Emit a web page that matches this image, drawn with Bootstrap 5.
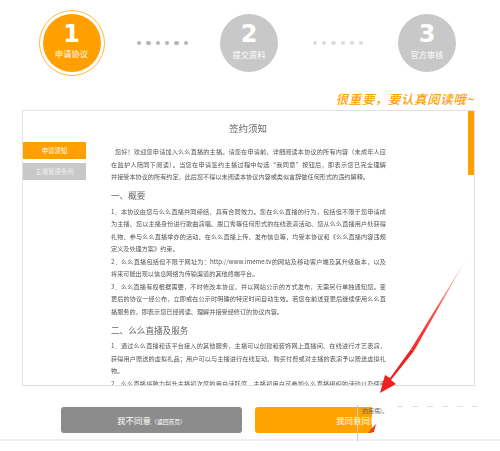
<!DOCTYPE html>
<html lang="zh">
<head>
<meta charset="utf-8">
<title>签约须知</title>
<link href="https://cdn.jsdelivr.net/npm/bootstrap@5.3.0/dist/css/bootstrap.min.css" rel="stylesheet">
<style>
html,body{margin:0;height:451px;overflow:hidden;background:#fff;font-family:"Noto Sans CJK SC","Liberation Sans",sans-serif}
.stage{position:relative;width:500px;height:451px;overflow:hidden}
.steps{height:90px;padding:10px 0 14px 39px;align-items:center}
.stepwrap{width:66px;height:66px;flex:none;border:1.5px solid #ffb840;border-radius:50%;padding:2.5px}
.stepdisc{width:58px;height:58px;flex:none;border-radius:50%;background:#c8c8c8;color:#fff}
.stepwrap .stepdisc{background:#ffa000}
.stepnum{font:bold 24px/18px "DejaVu Sans",sans-serif;height:18px;margin-top:11px}
.steplabel{font-size:8.2px;line-height:11px;margin-top:5.5px;white-space:nowrap}
.dotrow{flex:none;gap:5px;justify-content:center}
.dotrow.lite i{background:#dcdcdc}
.dotrow i{width:4.3px;height:4.3px;border-radius:50%;background:#b4b4b4;display:block}
.dots-a{width:115px}
.dots-b{width:120px}
.note{height:20px;padding-right:26px;color:#ffa000;font-size:12.5px;line-height:17px;letter-spacing:.55px;font-style:italic;font-weight:500;text-align:right;white-space:nowrap}
.panel{width:453px;height:276px;margin-left:22px;border:1px solid #e2e2e2;border-bottom-color:#dcdcdc;overflow:hidden;background:#fff}
.sidecol{width:63px;flex:none;padding-top:31px}
.sidebtn{height:17px;font-size:6.4px;line-height:17px;text-align:center;color:#fff;white-space:nowrap;margin-bottom:4px}
.sidebtn.on{background:#ffa000}
.sidebtn.off{background:#c8c8c8;color:#eee}
.doc{width:275px;flex:none;margin-left:25px;color:#555;overflow:hidden;filter:blur(.3px)}
.doctitle{font-size:9.5px;line-height:14px;text-align:center;color:#666;padding:10px 0 11px;margin-left:-1px}
.ln{font-size:6.15px;line-height:12.5px;height:12.5px;white-space:nowrap;color:#555}
.ln.full{white-space:normal;text-align:justify;text-align-last:justify;overflow:hidden}
.ln.lead0{padding-left:4px}
.doc h6{font-size:8.6px;line-height:14px;font-weight:400;color:#666;margin:4.5px 0 3.5px}
.track{width:6px;flex:none;margin-left:auto}
.thumb{height:64px;background:#ffa000}
.actions{padding:21px 0 0 61px;gap:13px}
.act{height:26px;border-radius:3px;color:#fff;font-size:8.5px;line-height:26px;text-align:center;white-space:nowrap}
.act small{font-size:5.8px}
.act-no{width:181px;background:#8c8c8c}
.act-yes{width:117px;background:#ffa300;padding-left:81px;border-radius:3px 0 0 3px}
.footline{height:2px;margin-top:6px;background:#f0f0f0}
.over{position:absolute;left:0;top:0;width:500px;height:451px;pointer-events:none}
.smear{position:absolute;left:362px;top:407px;font-size:6px;line-height:7px;color:#666}
</style>
</head>
<body>
<div class="stage">
  <div class="steps d-flex">
    <div class="stepwrap d-flex">
      <div class="stepdisc d-flex flex-column align-items-center">
        <div class="stepnum">1</div><div class="steplabel">申请协议</div>
      </div>
    </div>
    <div class="dotrow dots-a d-flex"><i></i><i></i><i></i><i></i><i></i><i></i></div>
    <div class="stepdisc d-flex flex-column align-items-center">
      <div class="stepnum">2</div><div class="steplabel">提交资料</div>
    </div>
    <div class="dotrow lite dots-b d-flex"><i></i><i></i><i></i><i></i><i></i><i></i></div>
    <div class="stepdisc d-flex flex-column align-items-center">
      <div class="stepnum">3</div><div class="steplabel">官方审核</div>
    </div>
  </div>
  <div class="note">很重要，要认真阅读哦~</div>
  <div class="panel d-flex">
    <div class="sidecol">
      <div class="sidebtn on">申请须知</div>
      <div class="sidebtn off">主播管理条例</div>
    </div>
    <div class="doc">
      <div class="doctitle">签约须知</div>
      <div class="ln full lead0">您好！欢迎您申请加入么么直播的主播。请您在申请前，详细阅读本协议的所有内容（未成年人应</div>
      <div class="ln full">在监护人陪同下阅读）。当您在申请签约主播过程中勾选“我同意”按钮后，即表示您已完全理解</div>
      <div class="ln">并接受本协议的所有约定，此后您不得以未阅读本协议内容或类似言辞做任何形式的违约解释。</div>
      <h6>一、概要</h6>
      <div class="ln full">1．本协议由您与么么直播共同缔结，具有合同效力。您在么么直播的行为，包括但不限于您申请成</div>
      <div class="ln full">为主播、您以主播身份进行歌曲演唱、脱口秀等任何形式的在线表演活动、您从么么直播用户处获得</div>
      <div class="ln full">礼物、参与么么直播举办的活动、在么么直播上传、发布信息等，均受本协议和《么么直播内容违规</div>
      <div class="ln">定义及处理方案》约束。</div>
      <div class="ln full">2．么么直播包括但不限于网址为：http://www.imeme.tv的网站及移动客户端及其升级版本，以及</div>
      <div class="ln">将来可能出现以信息网络为传输渠道的其他终端平台。</div>
      <div class="ln full">3．么么直播有权根据需要，不时修改本协议，并以网站公示的方式发布，无需另行单独通知您。变</div>
      <div class="ln full">更后的协议一经公布，立即或在公示时明确的特定时间自动生效。若您在前述变更后继续使用么么直</div>
      <div class="ln">播服务的，即表示您已经阅读、理解并接受经修订的协议内容。</div>
      <h6>二、么么直播及服务</h6>
      <div class="ln full">1．通过么么直播和该平台接入的其他服务，主播可以创建和装饰网上直播间、在线进行才艺表演，</div>
      <div class="ln full">获得用户赠送的虚拟礼品；用户可以与主播进行在线互动、购买付费或对主播的表演予以赠送虚拟礼</div>
      <div class="ln">物。</div>
      <div class="ln full">2．么么直播将致力提升主播初次度的用户活跃度，主播初用户可参加么么直播组织的活动以及使用</div>
    </div>
    <div class="track"><div class="thumb"></div></div>
  </div>
  <div class="actions d-flex">
    <div class="act act-no">我不同意<small>（返回首页）</small></div>
    <div class="act act-yes">我同意同意</div>
  </div>
  <div class="footline"></div>
  <div class="smear">的疾病)。</div>
  <svg class="over" viewBox="0 0 500 451" aria-hidden="true">
    <defs>
      <linearGradient id="fade" x1="468" y1="256" x2="400" y2="362" gradientUnits="userSpaceOnUse">
        <stop offset="0" stop-color="#ff2020" stop-opacity="0"/>
        <stop offset=".5" stop-color="#ff2020" stop-opacity=".8"/>
        <stop offset="1" stop-color="#f01818"/>
      </linearGradient>
    </defs>
    <path d="M468 256 L411 349 L414 351 Z" fill="url(#fade)"/>
    <path d="M411 349 L414 351 L391 380 L396 384 L380 393 L385 375 L390 378 Z" fill="#f02020"/>
    <path d="M376 424 L374 432 L368 433 L372 428 Z" fill="#e8431e"/>
    <rect x="357" y="405" width="1" height="36" fill="#c8c8c8"/>
    <path d="M397 406.500 H480" stroke="#d4d4d4" stroke-width="1" stroke-dasharray="6 9" opacity=".7"/>
  </svg>
</div>
<script src="https://cdn.jsdelivr.net/npm/bootstrap@5.3.0/dist/js/bootstrap.bundle.min.js"></script>
</body>
</html>
